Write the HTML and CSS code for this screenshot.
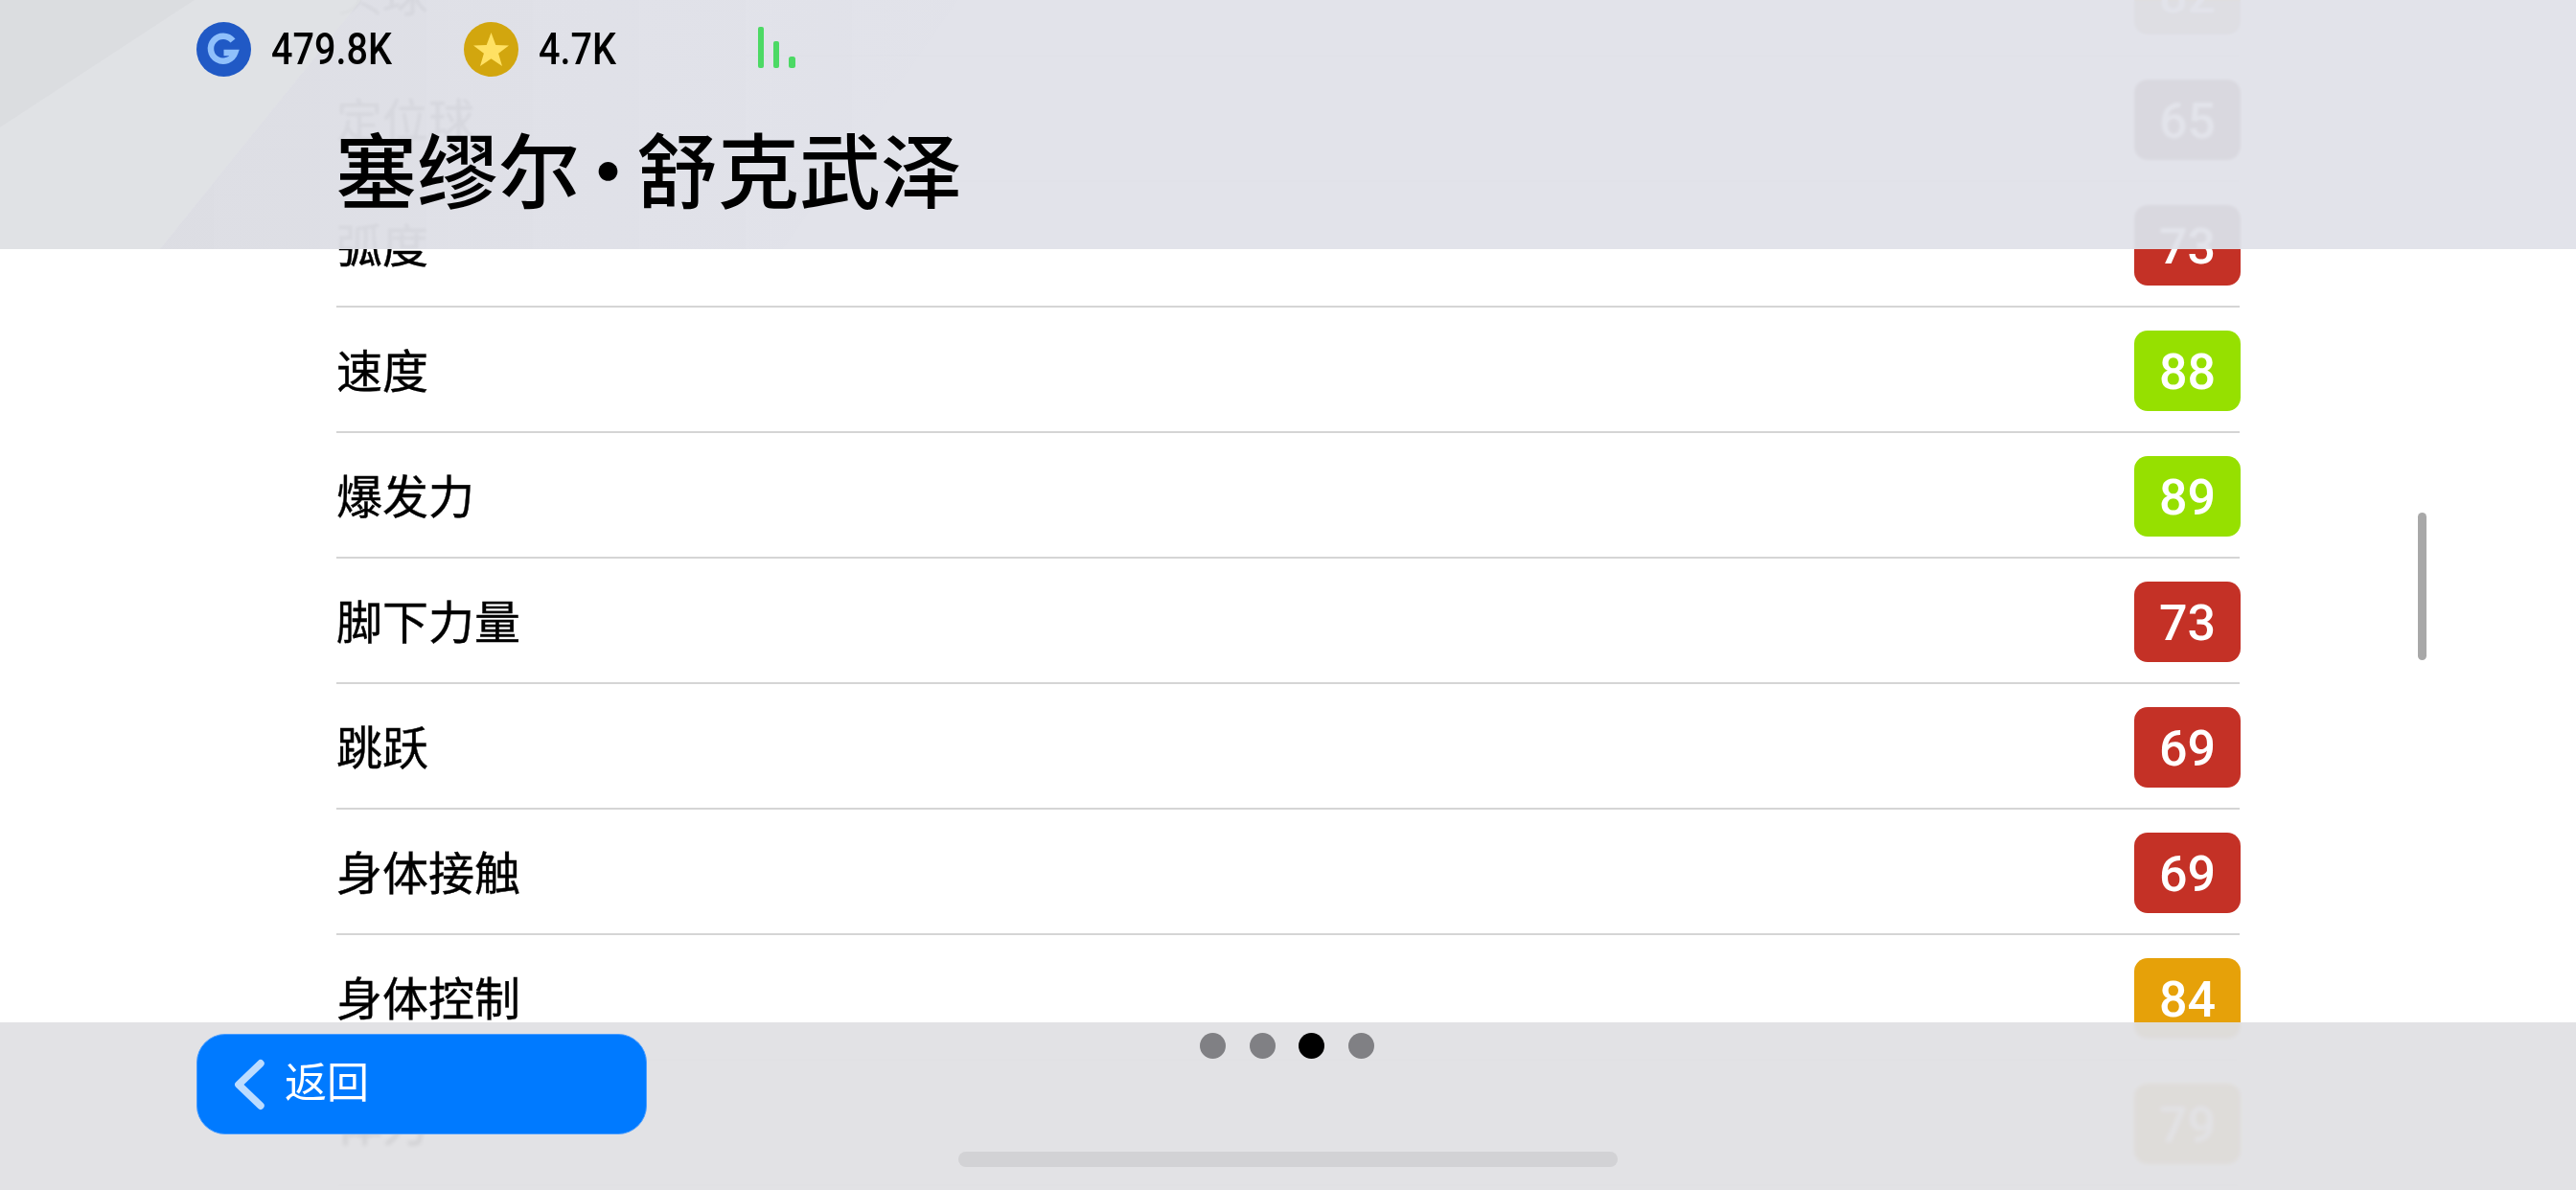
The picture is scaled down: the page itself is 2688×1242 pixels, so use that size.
FILE: index.html
```html
<!DOCTYPE html>
<html lang="zh-CN">
<head>
<meta charset="utf-8">
<title>塞缪尔·舒克武泽</title>
<link rel="stylesheet" href="styles.css">
</head>
<body>
<div class="screen">
  <main class="list">
    <div class="row"><span class="label">头球</span><span class="score tier-orange">82</span></div>
    <div class="row"><span class="label">定位球</span><span class="score tier-red">65</span></div>
    <div class="row"><span class="label">弧度</span><span class="score tier-red">73</span></div>
    <div class="row"><span class="label">速度</span><span class="score tier-green">88</span></div>
    <div class="row"><span class="label">爆发力</span><span class="score tier-green">89</span></div>
    <div class="row"><span class="label">脚下力量</span><span class="score tier-red">73</span></div>
    <div class="row"><span class="label">跳跃</span><span class="score tier-red">69</span></div>
    <div class="row"><span class="label">身体接触</span><span class="score tier-red">69</span></div>
    <div class="row"><span class="label">身体控制</span><span class="score tier-orange">84</span></div>
    <div class="row"><span class="label">体力</span><span class="score tier-orange">79</span></div>
  </main>

  <div class="scrollbar"></div>

  <header class="topbar">
    <svg class="topbar-art" viewBox="0 0 2688 260" preserveAspectRatio="none" aria-hidden="true">
      <defs>
        <linearGradient id="wedge" x1="167" y1="0" x2="1000" y2="0" gradientUnits="userSpaceOnUse">
          <stop offset="0" stop-color="#d9dadf" stop-opacity=".6"/>
          <stop offset="1" stop-color="#dfe0e9" stop-opacity=".1"/>
        </linearGradient>
      </defs>
      <polygon points="0,0 377,0 167,260 0,260" fill="#e0e1e4" opacity=".8"/>
      <polygon points="0,0 203,0 0,133" fill="#d9dade" opacity=".6"/>
      <polygon points="377,0 1000,0 817,260 167,260" fill="url(#wedge)"/>
    </svg>
    <div class="stats">
      <div class="stat">
        <svg class="coin" viewBox="0 0 57 57" aria-hidden="true">
          <circle cx="28.5" cy="28.5" r="28.5" fill="#2059c5"/>
          <path d="M38 19.5a13 13 0 1 0 2.2 12.5H28.5" fill="none" stroke="#8fc0fb" stroke-width="6.5"/>
        </svg>
        <span class="stat-value">479.8K</span>
      </div>
      <div class="stat">
        <svg class="coin" viewBox="0 0 57 57" aria-hidden="true">
          <circle cx="28.5" cy="28.5" r="28.5" fill="#d2a60e"/>
          <polygon points="28.5,11 33.3,24 47,24.4 36.1,32.8 40,46 28.5,38.3 17,46 20.9,32.8 10,24.4 23.7,24" fill="#ffe163"/>
        </svg>
        <span class="stat-value">4.7K</span>
      </div>
      <svg class="signal" viewBox="0 0 39 43" aria-hidden="true">
        <rect x="0" y="0" width="6" height="43" rx="2" fill="#4cd964"/>
        <rect x="16" y="15" width="6" height="28" rx="2" fill="#4cd964"/>
        <rect x="32" y="31" width="7" height="12" rx="2.5" fill="#4cd964"/>
      </svg>
    </div>
    <h1 class="title">塞缪尔<span class="middot">·</span>舒克武泽</h1>
  </header>

  <footer class="footer">
    <button class="back" type="button">
      <svg class="chevron" viewBox="0 0 40 62" aria-hidden="true">
        <path d="M34 5 7 31l27 26" fill="none" stroke="#bcdcff" stroke-width="9" stroke-linecap="round" stroke-linejoin="round"/>
      </svg>
      <span>返回</span>
    </button>
    <div class="dots">
      <span class="dot"></span>
      <span class="dot"></span>
      <span class="dot active"></span>
      <span class="dot"></span>
    </div>
    <div class="home-indicator"></div>
  </footer>
</div>
</body>
</html>
```

FILE: styles.css
```css
* { box-sizing: border-box; }

html, body {
  margin: 0;
  padding: 0;
  background: #fff;
}

body {
  width: 2688px;
  height: 1242px;
  overflow: hidden;
  font-family: "Noto Sans CJK SC", "Noto Sans", sans-serif;
  color: #000;
}

.screen {
  position: relative;
  width: 2688px;
  height: 1242px;
  overflow: hidden;
  background: #fff;
}

.list {
  margin-top: -72px;
  padding: 0 351px;
}

.row {
  display: flex;
  align-items: center;
  justify-content: space-between;
  height: 131px;
  border-bottom: 2px solid #d5d5d5;
}

.label {
  padding-bottom: 4px;
  font-size: 48px;
  line-height: 60px;
  font-weight: 400;
  -webkit-text-stroke: 0.4px #000;
}

.score {
  display: flex;
  align-items: center;
  justify-content: center;
  width: 111px;
  height: 84px;
  margin-top: 3px;
  margin-right: -1px;
  padding-top: 3px;
  border-radius: 14px;
  color: #fff;
  font-family: Roboto, "Liberation Sans", sans-serif;
  font-size: 52px;
  font-weight: 500;
  line-height: 1;
}

.tier-red { background: #c43126; }
.tier-orange { background: #e6a109; }
.tier-green { background: #96e000; }

.scrollbar {
  position: absolute;
  left: 2523px;
  top: 535px;
  width: 9px;
  height: 154px;
  border-radius: 5px;
  background: #a8a8a8;
}

.topbar {
  position: absolute;
  top: 0;
  left: 0;
  width: 2688px;
  height: 260px;
  background: rgba(224, 225, 233, 0.94);
  -webkit-backdrop-filter: saturate(0.2) blur(1.5px);
  backdrop-filter: saturate(0.2) blur(1.5px);
}

.topbar-art {
  position: absolute;
  inset: 0;
  width: 100%;
  height: 100%;
}

.stats {
  position: relative;
  display: grid;
  grid-template-columns: 279px 307px 39px;
  align-items: start;
  padding: 23px 0 0 205px;
  height: 124px;
}

.stat {
  display: flex;
  align-items: center;
  gap: 21px;
}

.coin {
  display: block;
  width: 57px;
  height: 57px;
  flex: none;
}

.stat-value {
  display: block;
  font-family: Roboto, "Liberation Sans", sans-serif;
  font-size: 46px;
  font-weight: 500;
  line-height: 57px;
  transform: scaleX(0.86);
  transform-origin: left center;
}

.signal {
  display: block;
  width: 39px;
  height: 43px;
  margin-top: 5px;
}

.title {
  position: relative;
  margin: 0;
  padding-left: 350px;
  font-size: 85px;
  line-height: 100px;
  font-weight: 500;
}

.middot {
  margin: 0 -13px;
}

.footer {
  position: absolute;
  left: 0;
  right: 0;
  bottom: 0;
  height: 175px;
  display: flex;
  align-items: flex-start;
  padding: 12px 0 0 205px;
  background: rgba(224, 224, 227, 0.93);
  -webkit-backdrop-filter: saturate(0.5) blur(2px);
  backdrop-filter: saturate(0.5) blur(2px);
}

.back {
  display: flex;
  align-items: center;
  gap: 20px;
  width: 470px;
  height: 105px;
  padding: 0 0 10px 37px;
  border: 1px solid #4a9dff;
  border-radius: 30px;
  background: #007aff;
  color: #fff;
  font-family: inherit;
  font-size: 44px;
  line-height: 50px;
}

.chevron {
  display: block;
  width: 34px;
  height: 60px;
  flex: none;
  margin-top: 10px;
}

.dots {
  display: flex;
  gap: 24.5px;
  margin: -1px 0 0 577px;
}

.dot {
  display: block;
  width: 27px;
  height: 27px;
  border-radius: 50%;
  background: #808084;
}

.dot.active { background: #000; }

.home-indicator {
  position: absolute;
  left: 0;
  right: 0;
  bottom: 24px;
  width: 688px;
  height: 16px;
  margin: 0 auto;
  border-radius: 8px;
  background: #d2d2d5;
}
```
